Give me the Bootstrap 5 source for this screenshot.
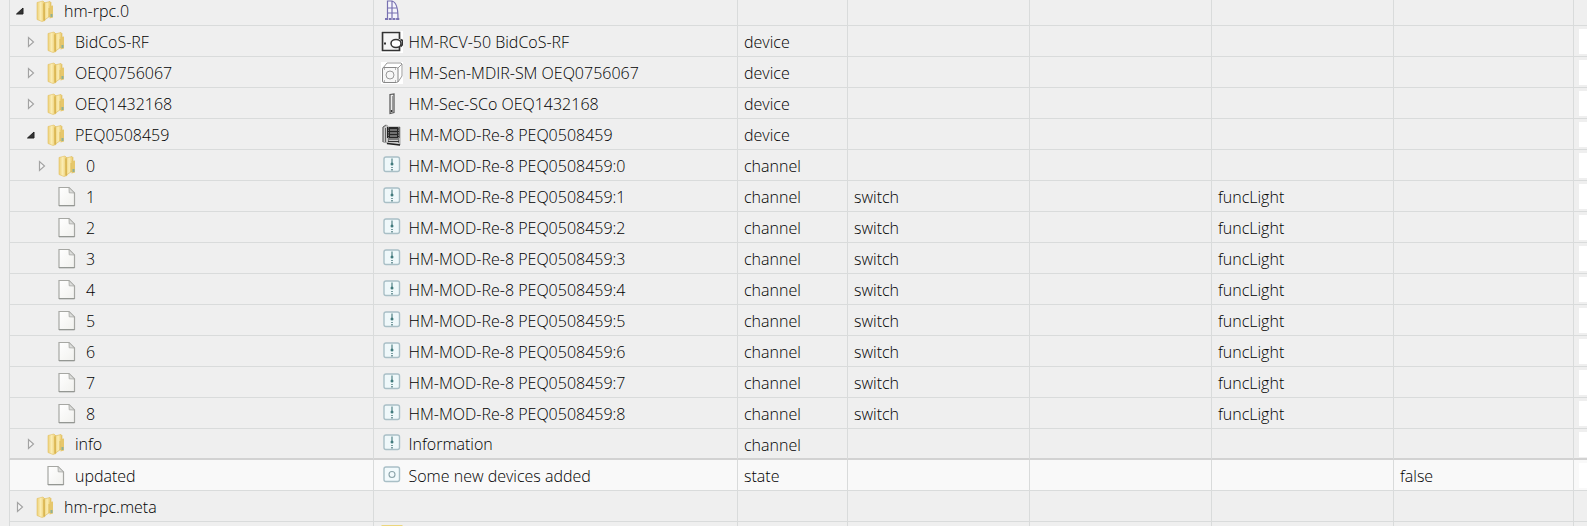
<!DOCTYPE html>
<html lang="en">
<head>
<meta charset="utf-8">
<meta name="viewport" content="width=device-width, initial-scale=1">
<title>Objects</title>
<link href="https://cdn.jsdelivr.net/npm/bootstrap@5.3.0/dist/css/bootstrap.min.css" rel="stylesheet">
<style>
body { background: #efefef; font-family: "Open Sans", "Noto Sans", sans-serif; font-size: 16px; line-height: 20px; color: #000; }
.viewport { padding-left: 9px; }
.objects { table-layout: fixed; margin-top: -5px; border-collapse: separate; border-spacing: 0; }
.objects td { height: 31px; padding: 1px 0 0 7px; border-right: 1px solid #d9dbdb; border-bottom: 1px solid #d9dbdb; white-space: nowrap; overflow: hidden; vertical-align: middle; font-weight: 350; }
.objects td:first-child { border-left: 1px solid #d9dbdb; padding-left: 2px; }
.objects td:last-child { border-right: 0; padding-left: 5px; }
.objects td.plain { padding-top: 2px; padding-left: 6px; }
.objects td.next-row { padding-top: 3px; vertical-align: top; }
.objects tr.before-active td { border-bottom: 2px solid #d2d2d2; }
.objects tr.active-row td { background: #f9f9f9; }
.c-type { width: 110px; } .c-mid { width: 182px; } .c-value { width: 180px; } .c-tools { width: 13px; }
.toggle { width: 24px; height: 20px; border: 0; padding: 0; background: none; flex: none; }
.toggle-icon { width: 16px; height: 20px; }
.lvl-1 { padding-left: 11px; } .lvl-2 { padding-left: 22px; }
.tree-icon { width: 20px; height: 22px; margin-right: 8px; }
.name-icon { width: 22px; height: 22px; margin-right: 6px; }
svg { display: block; flex: none; }
.tool-input { display: block; height: 25px; border: 0; padding: 0; background: #fff; }
</style>
</head>
<body>
<svg width="0" height="0" class="position-absolute" aria-hidden="true">
  <defs>
    <linearGradient id="gold"><stop offset="0" stop-color="#ecd079"/><stop offset=".45" stop-color="#fbedb4"/><stop offset="1" stop-color="#e8c665"/></linearGradient>
    <linearGradient id="paper" x2="1" y2="1"><stop offset="0" stop-color="#fff"/><stop offset="1" stop-color="#f1f1ee"/></linearGradient>
  </defs>
  <symbol id="closed" viewBox="0 0 16 20"><path d="M5.500 5.500v9l5-4.500z" fill="#f8f8f8" stroke="#a3a3a3" stroke-width="1.200"/></symbol>
  <symbol id="open" viewBox="0 0 16 20"><path d="M11 7v6H4.500z" fill="#333" stroke="#222" stroke-linejoin="round"/></symbol>
  <symbol id="folder" viewBox="0 0 20 22"><path d="M1 2.500l6-1.500 2 2v17.500l-3 1-5-2z" fill="url(#gold)" stroke="#e2c061" stroke-width=".6"/><path d="M8 3l6-1.500 1 1v13l-6.500 4.500z" fill="url(#gold)" stroke="#dcb954" stroke-width=".6"/><path d="M13.500 6l3.500-.5v12l-3.500 1z" fill="#e6c76c"/><path d="M8 3.500v17" stroke="#d2aa40" stroke-width="1"/><path d="M13 8v9" stroke="#d9b650" stroke-width=".8"/><path d="M14.500 14h2v3h-2z" fill="#8fb096"/></symbol>
  <symbol id="file" viewBox="0 0 20 22"><path d="M1 1.500h10l5.500 5.500v12.500H1z" fill="url(#paper)" stroke="#a6a7a3" stroke-width="1.200"/><path d="M11 1.500l.2 5.300 5.300.2z" fill="#dcdddb" stroke="#a6a7a3" stroke-width=".8"/><path d="M1 19.800h15.500" stroke="#8e908c"/></symbol>
  <symbol id="window" viewBox="0 0 22 22"><path d="M6.500 18V1h4.500c4 1 6 7 6 17M11 1v17M6.500 8h9M6.500 13h10" fill="#f5f5fb" stroke="#7770b0" stroke-width="1.200"/><path d="M4 19h15" stroke="#554ca0" stroke-width="1.500" stroke-dasharray="3 .7"/></symbol>
  <symbol id="receiver" viewBox="0 0 22 22"><path d="M0 0h22v22H0z" fill="#fff"/><path d="M1.500 1.500h17v18h-17z" fill="#f5f5f5" stroke="#333" stroke-width="1.700"/><path d="M18.500 8v8" stroke="#fff" stroke-width="2"/><ellipse cx="15" cy="12.500" rx="5" ry="4" fill="#fff" stroke="#333" stroke-width="1.500"/><path d="M3 12.500h2M19.500 8.500l2 1v4l-2 2" fill="none" stroke="#333" stroke-width="1.800"/></symbol>
  <symbol id="sensor" viewBox="0 0 22 22"><path d="M0 0h22v22H0z" fill="#fff"/><path d="M2 6l4-5h14l1 1v12l-4 6M17 6l4-4" fill="none" stroke="#999"/><rect x="1.500" y="5.500" width="15.500" height="15" rx="1.500" fill="#f7f7f7" stroke="#888"/><circle cx="9" cy="13" r="4" fill="none" stroke="#999"/><path d="M3 7h1M14 7h1M3 19h1M14 19h1" stroke="#777"/></symbol>
  <symbol id="contact" viewBox="0 0 22 22"><path d="M9 1.500l4-.5v18.500l-4 1z" fill="#ececec" stroke="#555" stroke-width="1.200"/><path d="M11.500 3v16" stroke="#888" stroke-width=".8"/><path d="M10.500 17v2" stroke="#333" stroke-width="1.500"/></symbol>
  <symbol id="module" viewBox="0 0 22 22"><path d="M2 3l4-2 1 2h12v18l-13-2-4-1z" fill="#c8c8c8" stroke="#888" stroke-width=".7"/><path d="M2 18V3l3-2M4.500 4v14" stroke="#666" fill="none"/><path d="M6 3h12.500v11H6z" fill="#262626"/><path d="M9 6h7M9 9h7M9 12h7" stroke="#bbb"/><path d="M7 15h11M7 17.500h11" stroke="#333" stroke-width="1.200"/><path d="M7.500 3v15M17.500 3v16" stroke="#777" stroke-dasharray="1.500 1"/><path d="M6 19.500l13 1.500" stroke="#222" stroke-width="1.500"/></symbol>
  <symbol id="channel" viewBox="0 0 22 22"><rect x="3" y="2" width="15.500" height="14.500" rx="2" fill="#eff8fa" stroke="#a9bfc6" stroke-width="1.400"/><path d="M11 3.500v6" stroke="#43777b" stroke-width="1.100"/><circle cx="11" cy="9" r="1.500" fill="#417a7c"/><path d="M11 12v1M11 14v1.500" stroke="#527e83" stroke-width="1.500"/></symbol>
  <symbol id="state" viewBox="0 0 22 22"><rect x="3" y="2" width="15.500" height="14.500" rx="2" fill="#f2fafc" stroke="#a9bfc6" stroke-width="1.400"/><circle cx="11" cy="9.500" r="3" fill="none" stroke="#8ca4aa" stroke-width="1.100"/></symbol>
  <symbol id="yellow" viewBox="0 0 22 22"><path d="M1 0h20l1 1v21H0V1z" fill="#ecd67c"/></symbol>
</svg>
<main class="viewport vh-100 overflow-hidden">
  <table class="objects w-100">
    <colgroup><col><col><col class="c-type"><col class="c-mid"><col class="c-mid"><col class="c-mid"><col class="c-value"><col class="c-tools"></colgroup>
    <tbody id="rows"></tbody>
  </table>
</main>
<script src="https://cdn.jsdelivr.net/npm/bootstrap@5.3.0/dist/js/bootstrap.bundle.min.js"></script>
<script>
// level, toggle, tree icon, id, name icon, name, type, role, function, value
const rows = [
  [0, 'open', 'folder', 'hm-rpc.0', 'window', ''],
  [1, 'closed', 'folder', 'BidCoS-RF', 'receiver', 'HM-RCV-50 BidCoS-RF', 'device'],
  [1, 'closed', 'folder', 'OEQ0756067', 'sensor', 'HM-Sen-MDIR-SM OEQ0756067', 'device'],
  [1, 'closed', 'folder', 'OEQ1432168', 'contact', 'HM-Sec-SCo OEQ1432168', 'device'],
  [1, 'open', 'folder', 'PEQ0508459', 'module', 'HM-MOD-Re-8 PEQ0508459', 'device'],
  [2, 'closed', 'folder', '0', 'channel', 'HM-MOD-Re-8 PEQ0508459:0', 'channel']
];
for (let i = 1; i <= 8; i++) rows.push([2, '', 'file', i, 'channel', 'HM-MOD-Re-8 PEQ0508459:' + i, 'channel', 'switch', 'funcLight']);
rows.push([1, 'closed', 'folder', 'info', 'channel', 'Information', 'channel'],
  [1, '', 'file', 'updated', 'state', 'Some new devices added', 'state', '', '', 'false'],
  [0, 'closed', 'folder', 'hm-rpc.meta', '', '']);
const icon = (id, cls) => `<svg class="${cls}" aria-hidden="true"><use href="#${id}"/></svg>`;
const plain = t => `<td class="plain">${t || ''}</td>`;
document.getElementById('rows').innerHTML = rows.map(([lvl, tog, tree, id, ico, name, type, role, fn, val]) => `
  <tr class="${id === 'info' ? 'before-active' : id === 'updated' ? 'active-row' : ''}">
    <td><div class="d-flex align-items-center lvl-${lvl}">${tog ? `<button class="toggle" type="button" aria-label="Toggle ${id}">${icon(tog, 'toggle-icon')}</button>` : '<span class="toggle"></span>'}${icon(tree, 'tree-icon')}<span>${id}</span></div></td>
    <td><div class="d-flex align-items-center">${ico ? icon(ico, 'name-icon') : ''}<span>${name}</span></div></td>
    ${plain(type)}${plain(role)}${plain()}${plain(fn)}${plain(val)}
    <td>${type ? `<input class="tool-input w-100" type="text" aria-label="Room of ${id}">` : ''}</td>
  </tr>`).join('') + `<tr><td></td><td class="next-row">${icon('yellow', 'name-icon')}</td>${plain().repeat(5)}<td></td></tr>`;
</script>
</body>
</html>
